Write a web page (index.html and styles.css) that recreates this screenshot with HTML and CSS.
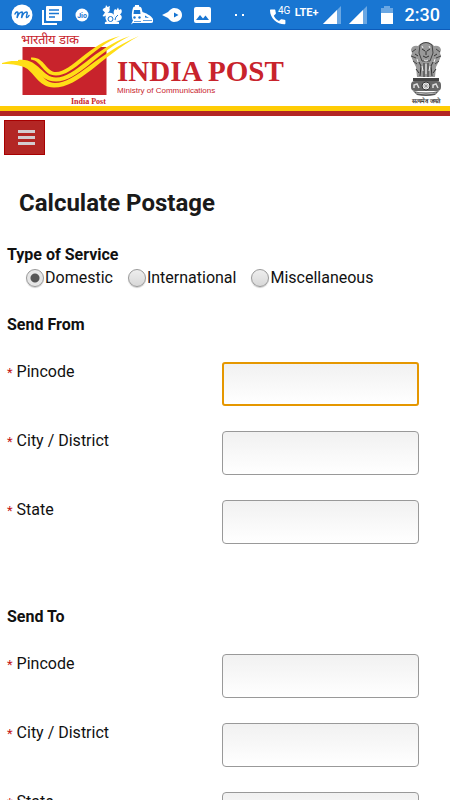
FILE: index.html
```html
<!DOCTYPE html>
<html lang="en">
<head>
    <meta charset="utf-8">
    <meta name="viewport" content="width=device-width, initial-scale=1">
    <title>Calculate Postage</title>
    <link rel="stylesheet" href="styles.css">
</head>
<body>
    <!-- Phone status bar -->
    <div class="statusbar">
        <div class="status-left">
            <svg class="status-icon" viewBox="0 0 22 22">
                <circle cx="11" cy="11" r="10.5" fill="#fff"/>
                <path d="M4 10c1-2 3-3 3-1l-1 5c1-3 3-6 5-6 1 0 0 3-.5 6 1-3 3-6 5-6 2 0-1 5 0 5.500 1 .3 2-1 2.500-2" fill="none" stroke="#1976d2" stroke-width="1.500" stroke-linecap="round"/>
            </svg>
            <svg class="status-icon" viewBox="0 0 22 22">
                <path d="M2 6v14h14" fill="none" stroke="#fff" stroke-width="2"/>
                <rect x="5" y="2" width="16" height="15" rx="1" fill="#fff"/>
                <path d="M8 6h10M8 9.500h10M8 13h6" stroke="#1976d2" stroke-width="1.500"/>
            </svg>
            <svg class="status-icon" viewBox="0 0 22 22">
                <circle cx="11" cy="11" r="6.500" fill="#fff"/>
                <text class="jio" x="11" y="13.500" text-anchor="middle">Jio</text>
            </svg>
            <svg class="status-icon" viewBox="0 0 22 22">
                <path d="M1.500 6Q2 4 4.500 3.500L5 1l1.500 2L9 2 8.500 4.500Q9.500 7 6.500 9q6-1 7.500 4l1 4 3 1v2H4q-1-2 2-2.500-2.500-3-1-6Q3 13 1.500 12L4 8.500z" fill="#fff"/>
                <path d="M13 11q-1-4 1-6l1.500 1L17 3.500l1 2.500 2-1q2 3-1 5.500 3 2 1 5-2 2-5 1.500z" fill="#fff"/>
                <circle cx="9.500" cy="15" r="2.500" fill="none" stroke="#1976d2"/>
                <path d="M14 16q0-3 3-5" fill="none" stroke="#1976d2"/>
            </svg>
            <svg class="status-icon" viewBox="0 0 22 22">
                <path d="M2 4q0-1.500 2-1.500V1h4v1.500q2 0 2.500 1.500l1 4c3 1 8 3 10.500 7 1 3-.500 4-2.500 4H2l-2 1.500 2-4C0 13 1 7 2 4z" fill="#fff"/>
                <path d="M3 6h6l.500 4H2.500zM14 11.500l4 2.500-4-.500z" fill="#1976d2"/>
                <circle cx="3.500" cy="13.500" r="1.200" fill="#1976d2"/>
                <circle cx="8.500" cy="13.500" r="1.200" fill="#1976d2"/>
                <path d="M3 17.500h7M12 16.500h9" stroke="#1976d2" stroke-width=".700"/>
            </svg>
            <svg class="status-icon" viewBox="0 0 22 22">
                <path d="M1 11l6-3c3-3 4-4 6-4 5 0 8 3 8 7s-3 7-8 7c-2 0-3-1-6-4z" fill="#fff"/>
                <path d="M13 8.500l4.500 2.500-4.500 2.500z" fill="#1976d2"/>
            </svg>
            <svg class="status-icon" viewBox="0 0 22 22">
                <rect x="3" y="3" width="17" height="16" rx="2" fill="#fff"/>
                <path d="M5 16l4-5 3 3.500 2.500-3L18 16z" fill="#1976d2"/>
            </svg>
        </div>
        <div class="status-right">
            <svg class="dots" viewBox="0 0 10 4"><path d="M0 1h2v2H0zM7 1h2v2H7z" fill="#fff"/></svg>
            <svg class="call" viewBox="0 0 20 20">
                <path d="M0 4.500h3.500c.600 0 .800.300.900 1 .100 1 .200 1.500.500 2.500 0 .500 0 .700-.300 1L2.800 10.800c1.200 2.400 3 4.200 5.200 5.300l1.700-1.600c.300-.300.600-.400 1-.300 1 .300 1.800.400 2.700.500.600 0 1 .300 1 .900v2.700c0 .600-.400 1-1 1C6 19.300-1 13-1 5.500c0-.600.300-1 1-1z" fill="#fff"/>
                <text class="net" x="7" y="9">4G</text>
            </svg>
            <span class="lte">LTE+</span>
            <svg class="signal" viewBox="0 0 18 18">
                <path d="M0 18L18 0v18z" fill="#6aa7e3"/>
                <path d="M0 18L14 4v14z" fill="#fff"/>
            </svg>
            <svg class="signal" viewBox="0 0 18 18">
                <path d="M0 18L18 0v18z" fill="#6aa7e3"/>
                <path d="M0 18L14 4v14z" fill="#fff"/>
            </svg>
            <svg class="battery" viewBox="0 0 12 18">
                <path d="M0 2h3V0h6v2h3v6H0z" fill="#6aa7e3"/>
                <path d="M0 7h12v11H0z" fill="#fff"/>
            </svg>
            <span class="clock">2:30</span>
        </div>
    </div>

    <!-- Site header -->
    <header class="header">
        <svg class="logo" viewBox="0 0 140 76" role="img" aria-label="India Post">
            <text class="hindi" x="21" y="14">भारतीय डाक</text>
            <rect x="22.500" y="17" width="84" height="48" fill="#c8232c"/>
            <!-- three wings -->
            <g fill="#ffde17">
                <path d="M31 27.500C44 26 46 42 56 42c16 0 32-28 64-36C92 18 74 45.500 56 45.500 43 45.500 42 31 31 29.500z"/>
                <path d="M18 30c20-3 24 17.500 38 17.500C76 47.500 92 19 130 6 96 23 78 51.500 56 51.500 38 51.500 36 33 18 32z"/>
                <path d="M2 33c8-3 18-2.500 25-.500 13 4.500 15 20.500 28 20.500 21 0 41-29 84-47C100 27 80 57.500 54 57.500 38 57.500 34 41 24 37 17 34.500 10 34 2 34z"/>
            </g>
            <text class="mark-name" x="71" y="74">India Post</text>
        </svg>
        <div class="brand">
            <div class="brand-name">INDIA POST</div>
            <div class="brand-sub">Ministry of Communications</div>
        </div>
        <svg class="emblem" viewBox="0 0 32 64" role="img" aria-label="State Emblem of India">
            <path d="M10 2q6-4 12 0l2 2q6-1 7 4l-1 3 1 3-2 5-3 6-1 10H7L6 25l-3-6-2-5 1-3-1-3q1-5 7-4z" fill="#999"/>
            <path d="M10 3q6-5 12 0l1 8-3 8h-8l-3-8zM2 10l4-3M1 14l5 2M30 10l-4-3M31 14l-5 2M3 19l4 3M29 19l-4 3" fill="none" stroke="#444"/>
            <path d="M12 7l3 2M20 7l-3 2M16 9v4M13 14q3 3 6 0M5 12l3 2M27 12l-3 2M9 20l2 4-1 10M23 20l-2 4 1 10M14 21v14M18 21v14M6 27l3 4M26 27l-3 4" fill="none" stroke="#333"/>
            <path d="M12 4l1 2M19 4l1 2M14 18l2 1 2-1M12 24l1 5M20 24l-1 5M7 17l1 3M25 17l-1 3M16 22v10" fill="none" stroke="#eee"/>
            <path d="M3 36h26v3H3z" fill="#444"/>
            <rect x="1" y="39" width="30" height="10" rx="4" fill="#666"/>
            <circle cx="16" cy="44" r="4" fill="#eee" stroke="#333"/>
            <path d="M16 41v6M13 44h6M14 42l4 4M18 42l-4 4" stroke="#777" stroke-width=".500"/>
            <path d="M4 46v-3l3-1 2 4M23 46v-3l3-1 2 4" fill="none" stroke="#ddd" stroke-width="1.500"/>
            <path d="M3 49q13 3 26 0l-4 4q-9 2-18 0z" fill="#555"/>
            <path d="M6 51q10 2 20 0" fill="none" stroke="#bbb"/>
            <text class="motto" x="16" y="61" text-anchor="middle">सत्यमेव जयते</text>
        </svg>
    </header>

    <button class="menu" type="button" aria-label="Menu">
        <span class="bar"></span>
        <span class="bar"></span>
        <span class="bar"></span>
    </button>

    <!-- Postage form -->
    <main>
        <h1>Calculate Postage</h1>
        <form>
            <fieldset class="service">
                <legend>Type of Service</legend>
                <div class="options">
                    <label><input type="radio" name="service" value="domestic" checked>Domestic</label>
                    <label><input type="radio" name="service" value="international">International</label>
                    <label><input type="radio" name="service" value="misc">Miscellaneous</label>
                </div>
            </fieldset>

            <fieldset class="address">
                <legend>Send From</legend>
                <div class="row">
                    <label for="fromPin"><span class="req">*</span> Pincode</label>
                    <input class="active" type="text" id="fromPin">
                </div>
                <div class="row">
                    <label for="fromCity"><span class="req">*</span> City / District</label>
                    <input type="text" id="fromCity">
                </div>
                <div class="row">
                    <label for="fromState"><span class="req">*</span> State</label>
                    <input type="text" id="fromState">
                </div>
            </fieldset>

            <fieldset class="address">
                <legend>Send To</legend>
                <div class="row">
                    <label for="toPin"><span class="req">*</span> Pincode</label>
                    <input type="text" id="toPin">
                </div>
                <div class="row">
                    <label for="toCity"><span class="req">*</span> City / District</label>
                    <input type="text" id="toCity">
                </div>
                <div class="row">
                    <label for="toState"><span class="req">*</span> State</label>
                    <input type="text" id="toState">
                </div>
            </fieldset>
        </form>
    </main>
</body>
</html>
```
FILE: styles.css
```css
* {
    box-sizing: border-box;
}

html {
    scrollbar-width: none;
}

body {
    margin: 0;
    font-family: Roboto, "Liberation Sans", sans-serif;
    font-size: 16px;
    line-height: 20px;
    color: #111;
    background-color: #fff;
}

svg {
    display: block;
    flex: none;
}

/* Status bar */
.statusbar {
    display: flex;
    justify-content: space-between;
    align-items: center;
    height: 30px;
    padding: 0 10px 0 11px;
    background-color: #1976d2;
    border-bottom: 1px solid #0d5bba;
    color: #fff;
}

.status-left, .status-right {
    display: flex;
    align-items: center;
    gap: 8px;
}

.status-icon {
    width: 22px;
    height: 22px;
}

.jio {
    font-size: 7px;
    font-weight: bold;
    fill: #1976d2;
}

.dots {
    width: 10px;
    height: 4px;
    margin-right: 18px;
}

.call {
    width: 20px;
    height: 20px;
    margin-right: -4px;
    overflow: visible;
}

.net {
    font-size: 10px;
    fill: #fff;
}

.lte {
    font-size: 11px;
    font-weight: bold;
    line-height: 16px;
    align-self: flex-start;
    margin-right: -4px;
}

.signal {
    width: 18px;
    height: 18px;
}

.battery {
    width: 12px;
    height: 18px;
    margin: 0 4px 0 6px;
}

.clock {
    font-size: 18px;
    font-weight: 500;
}

/* Header */
.header {
    display: flex;
    align-items: flex-start;
    height: 86px;
    padding-right: 8px;
    border-bottom: 5px solid #b32624;
    box-shadow: inset 0 -5px #ffcc05;
}

.logo {
    width: 140px;
    height: 76px;
}

.hindi {
    font-size: 13px;
    fill: #c8232c;
}

.mark-name {
    font-family: "Liberation Serif", serif;
    font-size: 8px;
    font-weight: bold;
    fill: #c8232c;
}

.brand {
    margin: 25px auto 0 -23px;
    color: #c8232c;
    white-space: nowrap;
}

.brand-name {
    font-family: "Liberation Serif", serif;
    font-size: 29px;
    font-weight: bold;
    line-height: 32px;
}

.brand-sub {
    font-family: "Liberation Sans", sans-serif;
    font-size: 8px;
    line-height: 8px;
}

.emblem {
    width: 32px;
    height: 64px;
    margin-top: 12px;
    overflow: visible;
}

.motto {
    font-size: 6px;
    font-weight: bold;
    fill: #333;
}

/* Menu button */
.menu {
    display: flex;
    flex-direction: column;
    align-items: center;
    justify-content: center;
    gap: 3px;
    width: 41px;
    height: 35px;
    margin: 4px;
    padding: 0 0 0 4px;
    background-color: #b32624;
    border: 1px solid #a80000;
    cursor: pointer;
}

.bar {
    width: 17px;
    height: 3px;
    background-color: #d3ccd0;
}

/* Form */
main {
    padding: 29px 0 20px;
}

h1 {
    margin: 0 0 27px 19px;
    font-size: 24px;
    line-height: 30px;
    font-weight: bold;
    color: #1a1a1a;
}

fieldset {
    margin: 0;
    padding: 0;
    border: 0;
}

form {
    padding: 0 31px 0 7px;
}

legend {
    padding: 0;
    font-weight: bold;
}

.service {
    margin-bottom: 27px;
}

.options {
    display: flex;
    gap: 15px;
    padding-left: 19px;
    margin-top: 3px;
}

.options label {
    display: flex;
    align-items: center;
    white-space: nowrap;
}

input[type="radio"] {
    appearance: none;
    width: 18px;
    height: 18px;
    margin: 0 1px 0 0;
    border: 1px solid #999;
    border-radius: 50%;
    background: linear-gradient(#eee, #d8d8d8);
    box-shadow: 0 1px 1px #ccc;
}

input[type="radio"]:checked {
    background: radial-gradient(circle, #555 4px, #e6e6e6 5px);
}

.address {
    margin-bottom: 63px;
}

.address legend {
    margin-bottom: 27px;
}

.row {
    display: grid;
    grid-template-columns: 12fr 11fr;
    align-items: start;
    margin-bottom: 25px;
}

.address .row:last-child {
    margin-bottom: 0;
}

.req {
    font-size: 13px;
    color: #c41616;
}

input[type="text"] {
    width: 100%;
    height: 44px;
    padding: 0 8px;
    border: 1px solid #999;
    border-radius: 4px;
    background: linear-gradient(#f1f1f1, #fff);
    font: inherit;
}

input.active, input[type="text"]:focus {
    border: 2px solid #e59700;
    border-radius: 3px;
    outline: none;
}
```
